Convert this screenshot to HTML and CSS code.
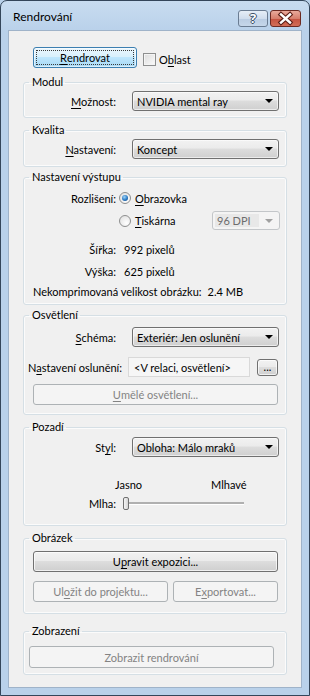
FILE: index.html
```html
<!DOCTYPE html>
<html lang="cs">

<head>
  <meta charset="UTF-8">
  <meta name="viewport" content="width=device-width, initial-scale=1.0">
  <title>Rendrování</title>
  <link rel="stylesheet" href="styles.css">
</head>

<body>
  <!-- Dialog window -->
  <div class="window">
    <div class="titlebar">
      <span class="title">Rendrování</span>
      <div class="caption">
        <span class="cap help">?</span>
        <span class="cap close">
          <svg width="31" height="17" viewBox="0 0 31 17">
            <path d="M11 4.5 L20 12.5 M20 4.5 L11 12.5" stroke="#5a1e16" stroke-width="4.6" stroke-linecap="square" fill="none" />
            <path d="M11 4.5 L20 12.5 M20 4.5 L11 12.5" stroke="#fff" stroke-width="2.4" stroke-linecap="square" fill="none" />
          </svg>
        </span>
      </div>
    </div>

    <div class="client">
      <!-- Render button and region checkbox -->
      <div class="top-row">
        <button class="btn btn-default"><span class="focus"><u>R</u>endrovat</span></button>
        <label class="check"><span class="checkbox"></span>O<u>b</u>last</label>
      </div>

      <fieldset class="group g-modul">
        <legend>Modul</legend>
        <div class="row row-first">
          <span class="lbl"><u>M</u>ožnost:</span>
          <div class="combo">NVIDIA mental ray<span class="arrow"></span></div>
        </div>
      </fieldset>

      <fieldset class="group g-kvalita">
        <legend>Kvalita</legend>
        <div class="row row-first">
          <span class="lbl"><u>N</u>astavení:</span>
          <div class="combo">Koncept<span class="arrow"></span></div>
        </div>
      </fieldset>

      <fieldset class="group g-vystup">
        <legend>Nastavení výstupu</legend>
        <div class="row row-res">
          <span class="lbl">Rozlišení:</span>
          <span class="radio checked"></span>
          <span class="radio-text"><u>O</u>brazovka</span>
        </div>
        <div class="row row-print">
          <span class="lbl"></span>
          <span class="radio"></span>
          <span class="radio-text"><u>T</u>iskárna</span>
          <div class="combo combo-off"><span class="combo-val">96 DPI</span><span class="arrow"></span></div>
        </div>
        <div class="row row-info row-w">
          <span class="lbl">Šířka:</span>
          <span class="val">992 pixelů</span>
        </div>
        <div class="row row-info row-h">
          <span class="lbl">Výška:</span>
          <span class="val">625 pixelů</span>
        </div>
        <div class="row row-info row-size">
          <span class="lbl-free">Nekomprimovaná velikost obrázku:</span>
          <span class="val-size">2.4 MB</span>
        </div>
      </fieldset>

      <fieldset class="group g-svetlo">
        <legend>Osvětlení</legend>
        <div class="row row-schema">
          <span class="lbl"><u>S</u>chéma:</span>
          <div class="combo">Exteriér: Jen oslunění<span class="arrow"></span></div>
        </div>
        <div class="row row-sun">
          <span class="lbl-sun">N<u>a</u>stavení oslunění:</span>
          <div class="field">&lt;V relaci, osvětlení&gt;</div>
          <button class="btn btn-dots">...</button>
        </div>
        <button class="btn btn-off btn-wide btn-artificial"><u>U</u>mělé osvětlení...</button>
      </fieldset>

      <fieldset class="group g-pozadi">
        <legend>Pozadí</legend>
        <div class="row row-style">
          <span class="lbl">St<u>y</u>l:</span>
          <div class="combo">Obloha: Málo mraků<span class="arrow"></span></div>
        </div>
        <div class="row row-ends">
          <span class="end-left">Jasno</span>
          <span class="end-right">Mlhavé</span>
        </div>
        <div class="row row-fog">
          <span class="lbl">Mlha:</span>
          <span class="thumb"></span>
          <span class="track"></span>
        </div>
      </fieldset>

      <fieldset class="group g-obrazek">
        <legend>Obrázek</legend>
        <button class="btn btn-wide btn-exposure">U<u>p</u>ravit expozici...</button>
        <div class="row row-save">
          <button class="btn btn-off btn-save">Ul<u>o</u>žit do projektu...</button>
          <button class="btn btn-off btn-export">E<u>x</u>portovat...</button>
        </div>
      </fieldset>

      <fieldset class="group g-zobrazeni">
        <legend>Zobrazení</legend>
        <button class="btn btn-off btn-show">Zobrazit rendrování</button>
      </fieldset>
    </div>
  </div>
</body>

</html>
```

FILE: styles.css
```css
/* Reset */
* {
  box-sizing: border-box;
}

html,
body {
  margin: 0;
  padding: 0;
}

body {
  font-family: Lato, "Open Sans", sans-serif;
  font-size: 11px;
  color: #000;
  background-color: #b9d1ea;
  white-space: nowrap;
}

u {
  text-decoration-thickness: 1px;
  text-underline-offset: 2px;
}

/* Window frame */
.window {
  width: 310px;
  height: 696px;
  border: 1px solid #34465a;
  border-radius: 7px 7px 0 0;
  background: linear-gradient(#c8dcf0, #b9d1ea 30px);
  padding: 0 7px 7px 7px;
  display: flex;
  flex-direction: column;
}

.titlebar {
  height: 29px;
  display: flex;
  justify-content: space-between;
  align-items: flex-start;
}

.title {
  margin: 8px 0 0 5px;
  font-size: 12px;
  line-height: 16px;
}

.caption {
  display: flex;
  gap: 2px;
  margin: 9px 1px 0 0;
}

.cap {
  height: 17px;
  border-radius: 3px;
  display: flex;
  align-items: center;
  justify-content: center;
}

.help {
  width: 30px;
  border: 1px solid #6a7c92;
  background: linear-gradient(#e6eef7, #d0dded 50%, #b9cce2 51%, #c6d7ea);
  color: #fff;
  font-family: "Open Sans", sans-serif;
  font-weight: bold;
  font-size: 13px;
  line-height: 15px;
  text-shadow: 1px 0 0 #3b4e66, -1px 0 0 #3b4e66, 0 1px 0 #3b4e66, 0 -1px 0 #3b4e66;
}

.close {
  width: 31px;
  border: 1px solid #6c2a22;
  background: linear-gradient(#e9a99b, #d77e6c 50%, #c4513f 51%, #d26e57);
}

.close svg {
  display: block;
  margin: -1px;
}

/* Client area */
.client {
  flex: 1;
  background-color: #f0f0f0;
  border: 1px solid #9fb3c9;
  padding: 16px 0 0 14px;
}

.top-row {
  display: flex;
  align-items: flex-start;
  margin-left: 10px;
}

/* Buttons */
.btn {
  font: inherit;
  color: #000;
  padding: 0;
  height: 21px;
  border: 1px solid #707070;
  border-radius: 3px;
  background: linear-gradient(#f2f2f2, #ebebeb 45%, #dddddd 50%, #cfcfcf);
  box-shadow: inset 0 0 0 1px rgba(255, 255, 255, 0.7);
  display: flex;
  align-items: center;
  justify-content: center;
}

.btn-default {
  width: 104px;
  border-color: #3c7fb1;
  background: linear-gradient(#eaf6fd, #d9f0fc 45%, #bee6fd 50%, #a7d9f5);
  box-shadow: inset 0 0 0 1px rgba(255, 255, 255, 0.6);
  padding: 2px;
}

.focus {
  flex: 1;
  align-self: stretch;
  border: 1px dotted #3a3a3a;
  display: flex;
  align-items: center;
  justify-content: center;
}

.btn-off {
  color: #838383;
  border-color: #adb2b5;
  background: #f4f4f4;
  box-shadow: none;
}

.btn-wide {
  width: 245px;
  margin-left: 9px;
}

.btn-dots {
  width: 21px;
  height: 17px;
  margin-left: 7px;
  line-height: 10px;
  align-items: flex-end;
  padding-bottom: 3px;
}

/* Checkbox */
.check {
  display: flex;
  align-items: center;
  margin: 6px 0 0 6px;
  line-height: 13px;
}

.checkbox {
  width: 13px;
  height: 13px;
  border: 1px solid #8e8f8f;
  background: linear-gradient(135deg, #dcdcdc, #fbfbfb);
  box-shadow: inset 0 0 0 1px #f4f4f4;
  margin-right: 3px;
}

/* Group boxes */
.group {
  margin: 0;
  width: 264px;
  min-width: 0;
  border: 1px solid #d5dfe5;
  border-radius: 3px;
  padding: 0 6px 0 0;
  box-shadow: inset 0 0 0 1px #fbfbfb;
}

.group legend {
  margin-left: 5px;
  padding: 0 2px 0 3px;
  line-height: 14px;
}

.g-modul {
  margin-top: 7px;
  height: 43px;
}

.g-kvalita {
  margin-top: 5px;
  height: 44px;
}

.g-vystup {
  margin-top: 3px;
  height: 135px;
}

.g-svetlo {
  margin-top: 3px;
  height: 107px;
}

.g-pozadi {
  margin-top: 5px;
  height: 106px;
}

.g-obrazek {
  margin-top: 5px;
  height: 83px;
}

.g-zobrazeni {
  margin-top: 10px;
  height: 51px;
}

/* Rows */
.row {
  display: flex;
  align-items: center;
}

.lbl {
  width: 92px;
  flex-shrink: 0;
  text-align: right;
}

.row-first {
  margin-top: 2px;
  height: 20px;
}

/* Combo boxes */
.combo {
  width: 147px;
  height: 20px;
  margin-left: 16px;
  border: 1px solid #707070;
  border-radius: 3px;
  background: linear-gradient(#f2f2f2, #ebebeb 45%, #dddddd 50%, #cfcfcf);
  box-shadow: inset 0 0 0 1px rgba(255, 255, 255, 0.6);
  display: flex;
  align-items: center;
  justify-content: space-between;
  padding: 0 5px 0 4px;
}

.arrow {
  width: 0;
  height: 0;
  border-left: 4px solid transparent;
  border-right: 4px solid transparent;
  border-top: 4px solid #000;
}

.combo-off {
  width: 68px;
  margin-left: auto;
  color: #6d6d6d;
  border-color: #c3c6c9;
  background: #f4f4f4;
  box-shadow: none;
  padding: 2px 6px 2px 2px;
}

.combo-off .combo-val {
  background: #e8e8e8;
  align-self: stretch;
  width: 44px;
  padding-left: 2px;
  display: flex;
  align-items: center;
}

.combo-off .arrow {
  border-top-color: #a0a0a0;
}

/* Radio buttons */
.radio {
  width: 12px;
  height: 12px;
  margin-left: 3px;
  border-radius: 50%;
  border: 1px solid #8e8f8f;
  background: radial-gradient(circle at 65% 70%, #ffffff, #dcdcdc);
  position: relative;
}

.radio.checked::after {
  content: "";
  position: absolute;
  left: 2px;
  top: 2px;
  width: 6px;
  height: 6px;
  border-radius: 50%;
  background: radial-gradient(circle at 40% 35%, #9fd5f7, #2a79c4 55%, #0f3f75);
}

.radio-text {
  margin-left: 4px;
}

.row-res {
  margin-top: 5px;
  height: 18px;
}

.row-print {
  margin-top: 4px;
  height: 19px;
}

.row-print .combo-off {
  height: 19px;
}

.row-info {
  height: 16px;
}

.val {
  margin-left: 8px;
}

.row-w {
  margin-top: 11px;
}

.row-h {
  margin-top: 6px;
}

.row-size {
  margin-top: 4px;
}

.lbl-free {
  margin-left: 9px;
}

.val-size {
  margin-left: 6px;
}

/* Lighting */
.row-schema {
  margin-top: 5px;
  height: 20px;
}

.row-sun {
  margin-top: 10px;
  height: 20px;
}

.lbl-sun {
  width: 97px;
  margin-left: 1px;
  text-align: right;
}

.field {
  width: 122px;
  height: 20px;
  margin-left: 6px;
  border: 1px solid #d9d9d9;
  background: #f6f6f6;
  padding-left: 5px;
  display: flex;
  align-items: center;
}

.btn-artificial {
  margin-top: 7px;
}

/* Background */
.row-style {
  margin-top: 3px;
  height: 20px;
}

.row-ends {
  margin-top: 20px;
  height: 14px;
}

.end-left {
  margin-left: 91px;
}

.end-right {
  margin-left: 69px;
}

.row-fog {
  margin-top: 5px;
  height: 14px;
}

.thumb {
  width: 6px;
  height: 13px;
  margin-left: 7px;
  border: 1px solid #707070;
  border-radius: 2px;
  background: linear-gradient(90deg, #f4f4f4, #d6d6d6);
}

.track {
  width: 115px;
  height: 3px;
  border-top: 2px solid #b0b0b0;
  border-bottom: 1px solid #ffffff;
}

/* Image */
.btn-exposure {
  margin-top: 6px;
}

.row-save {
  margin-top: 9px;
  margin-left: 9px;
  gap: 5px;
}

.btn-save {
  width: 135px;
}

.btn-export {
  width: 105px;
}

/* Display */
.btn-show {
  width: 245px;
  height: 22px;
  margin: 8px 0 0 5px;
}
```
